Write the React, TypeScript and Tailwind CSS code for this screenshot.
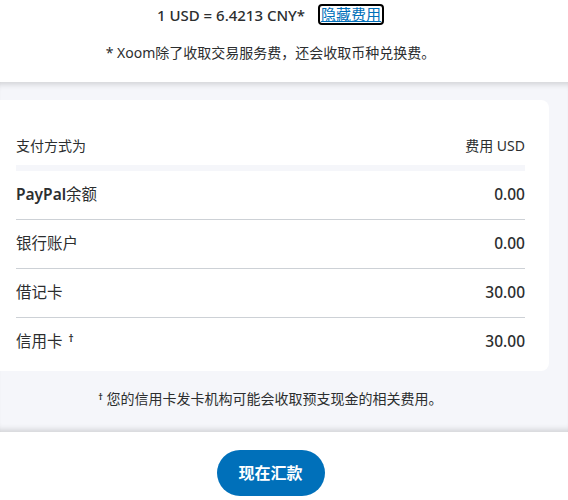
import React from "react";

const rows = [
  { label: "PayPal", extra: "余额", fee: "0.00" },
  { label: "", extra: "银行账户", fee: "0.00" },
  { label: "", extra: "借记卡", fee: "30.00" },
  { label: "", extra: "信用卡", fee: "30.00", dagger: true },
];

export default function App() {
  return (
    <div
      className="w-[568px] h-[500px] overflow-hidden bg-white text-[#2c2e2f]"
      style={{ fontFamily: '"Noto Sans", "Noto Sans CJK SC", sans-serif' }}
    >
      {/* Rate summary */}
      <div className="w-[541px] flex flex-col items-center pt-1 pb-[19px]">
        <div className="flex items-center h-[21px] gap-[13px]">
          <span className="text-[15px] font-medium leading-5">1 USD = 6.4213 CNY*</span>
          <a
            href="#"
            className="text-[15px] leading-[17px] text-[#0070ba] underline border-2 border-black rounded-[4px] px-[1px]"
          >
            隐藏费用
          </a>
        </div>
        <p className="mt-[18px] text-[14px] leading-5">* Xoom除了收取交易服务费，还会收取币种兑换费。</p>
      </div>

      {/* Fee table */}
      <div className="h-[350px] bg-[#f5f6fa] shadow-[inset_0_7px_6px_-5px_rgba(0,0,0,0.16),inset_0_-7px_6px_-5px_rgba(0,0,0,0.16)]">
        <div className="w-[541px] pt-[18px]">
          <div className="-mx-2 bg-white rounded-lg pl-6 pr-6 pt-9 pb-[5px]">
            <div className="flex justify-between text-[14px] leading-5 mb-[9px]">
              <span>支付方式为</span>
              <span>费用 USD</span>
            </div>
            <div className="h-[6px] bg-[#f5f6fa]" />
            {rows.map((r, i) => (
              <div
                key={i}
                className={
                  "flex items-center justify-between h-12 " +
                  (i < rows.length - 1 ? "border-b border-[#cdd1d6] box-content" : "")
                }
              >
                <span className="text-[15.5px]">
                  {r.label && <span className="font-semibold">{r.label}</span>}
                  {r.extra}
                  {r.dagger && <sup className="ml-1.5 text-[10px] font-bold">†</sup>}
                </span>
                <span className="text-[15.5px] font-medium">{r.fee}</span>
              </div>
            ))}
          </div>
          <p className="mt-[18px] text-center text-[14px] leading-5">
            <sup className="text-[9px] font-bold">†</sup> 您的信用卡发卡机构可能会收取预支现金的相关费用。
          </p>
        </div>
      </div>

      {/* Action */}
      <div className="w-[541px] flex justify-center pt-[18px]">
        <button className="w-[108px] h-[46px] rounded-full bg-[#0070ba] text-white text-[16px] font-bold">
          现在汇款
        </button>
      </div>
    </div>
  );
}
